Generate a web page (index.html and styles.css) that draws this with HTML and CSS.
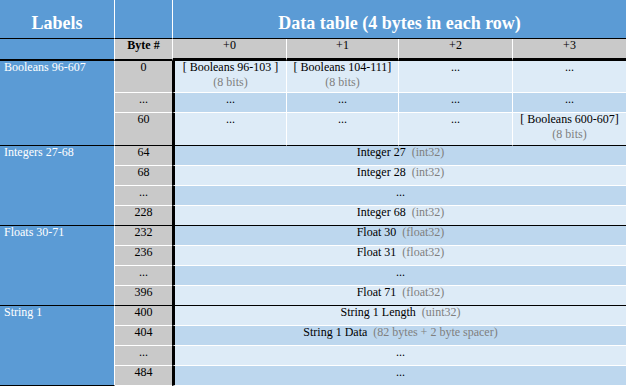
FILE: index.html
```html
<!DOCTYPE html>
<html>
<head>
<meta charset="utf-8">
<link rel="stylesheet" href="styles.css">
</head>
<body>
<div class="sheet">
  <div class="c hd lab">Labels</div>
  <div class="c hd byte"></div>
  <div class="c hd data">Data table (4 bytes in each row)</div>

  <div class="c sh lab"></div>
  <div class="c sh byte"><b>Byte #</b></div>
  <div class="c sh d first">+0</div>
  <div class="c sh d">+1</div>
  <div class="c sh d">+2</div>
  <div class="c sh d last">+3</div>

  <div class="c label span3">Booleans 96-607</div>
  <div class="c num">0</div>
  <div class="c d first lt">[ Booleans 96-103 ]<span class="sub t">(8 bits)</span></div>
  <div class="c d lt">[ Booleans 104-111]<span class="sub t">(8 bits)</span></div>
  <div class="c d lt">...</div>
  <div class="c d last lt">...</div>
  <div class="c num">...</div>
  <div class="c d first dk">...</div>
  <div class="c d dk">...</div>
  <div class="c d dk">...</div>
  <div class="c d last dk">...</div>
  <div class="c num end">60</div>
  <div class="c d first lt end">...</div>
  <div class="c d lt end">...</div>
  <div class="c d lt end">...</div>
  <div class="c d last lt end">[ Booleans 600-607]<span class="sub t">(8 bits)</span></div>

  <div class="c label span4">Integers 27-68</div>
  <div class="c num">64</div>
  <div class="c d first wide dk">Integer 27&nbsp; <span class="t">(int32)</span></div>
  <div class="c num">68</div>
  <div class="c d first wide lt">Integer 28&nbsp; <span class="t">(int32)</span></div>
  <div class="c num">...</div>
  <div class="c d first wide dk">...</div>
  <div class="c num end">228</div>
  <div class="c d first wide lt end">Integer 68&nbsp; <span class="t">(int32)</span></div>

  <div class="c label span4">Floats 30-71</div>
  <div class="c num">232</div>
  <div class="c d first wide dk">Float 30&nbsp; <span class="t">(float32)</span></div>
  <div class="c num">236</div>
  <div class="c d first wide lt">Float 31&nbsp; <span class="t">(float32)</span></div>
  <div class="c num">...</div>
  <div class="c d first wide dk">...</div>
  <div class="c num end">396</div>
  <div class="c d first wide lt end">Float 71&nbsp; <span class="t">(float32)</span></div>

  <div class="c label span4">String 1</div>
  <div class="c num">400</div>
  <div class="c d first wide lt">String 1 Length&nbsp; <span class="t">(uint32)</span></div>
  <div class="c num">404</div>
  <div class="c d first wide dk">String 1 Data&nbsp; <span class="t">(82 bytes + 2 byte spacer)</span></div>
  <div class="c num">...</div>
  <div class="c d first wide lt">...</div>
  <div class="c num">484</div>
  <div class="c d first wide dk">...</div>
</div>
</body>
</html>
```

FILE: styles.css
```css
html, body {
  margin: 0;
  padding: 0;
  background: #ffffff;
}

.sheet {
  display: grid;
  grid-template-columns: 115px 57px 115px 112px 114px 113px;
  grid-template-rows: 39px 22px 32px 20px 33px repeat(12, 20px);
  width: 626px;
  font-family: "Liberation Serif", "Times New Roman", serif;
  font-size: 12px;
  line-height: 12px;
  color: #000000;
}

.c {
  box-sizing: border-box;
  border-bottom: 1px solid #ffffff;
  overflow: hidden;
  white-space: nowrap;
}

/* top header row */
.hd {
  background: #5b9bd5;
  border-bottom: 1px solid #000000;
  color: #ffffff;
  font-weight: bold;
  font-size: 18px;
  line-height: 20px;
  padding-top: 13px;
  text-align: center;
}
.hd.lab { border-right: 1px solid #ffffff; }
.hd.data {
  grid-column: span 4;
  border-left: 1px solid #ffffff;
}

/* sub header row */
.sh {
  background: #c9c9c9;
  text-align: center;
  border-bottom: 2px solid #000000;
}
.sh.lab {
  background: #5b9bd5;
  border-right: 1px solid #ffffff;
}
.sh.d {
  border-bottom: 3px solid #000000;
  border-right: 1px solid #ffffff;
}
.sh.d.first { border-left: 1px solid #ffffff; }
.sh.d.last { border-right: 0; }

/* body */
.label {
  background: #5b9bd5;
  color: #ffffff;
  border-right: 1px solid #ffffff;
  border-bottom: 1px solid #000000;
  padding-left: 4px;
}
.span3 { grid-row: span 3; }
.span4 { grid-row: span 4; }

.num {
  background: #c9c9c9;
  text-align: center;
}

.d {
  text-align: center;
  border-right: 1px solid #ffffff;
}
.d.last { border-right: 0; }
.first { border-left: 3px solid #000000; }
.wide {
  grid-column: span 4;
  border-right: 0;
}

.lt { background: #ddebf7; }
.dk { background: #bdd7ee; }
.end { border-bottom-color: #000000; }

.t { color: #7f7f7f; }
.sub {
  display: block;
  margin-top: 3px;
}
```
